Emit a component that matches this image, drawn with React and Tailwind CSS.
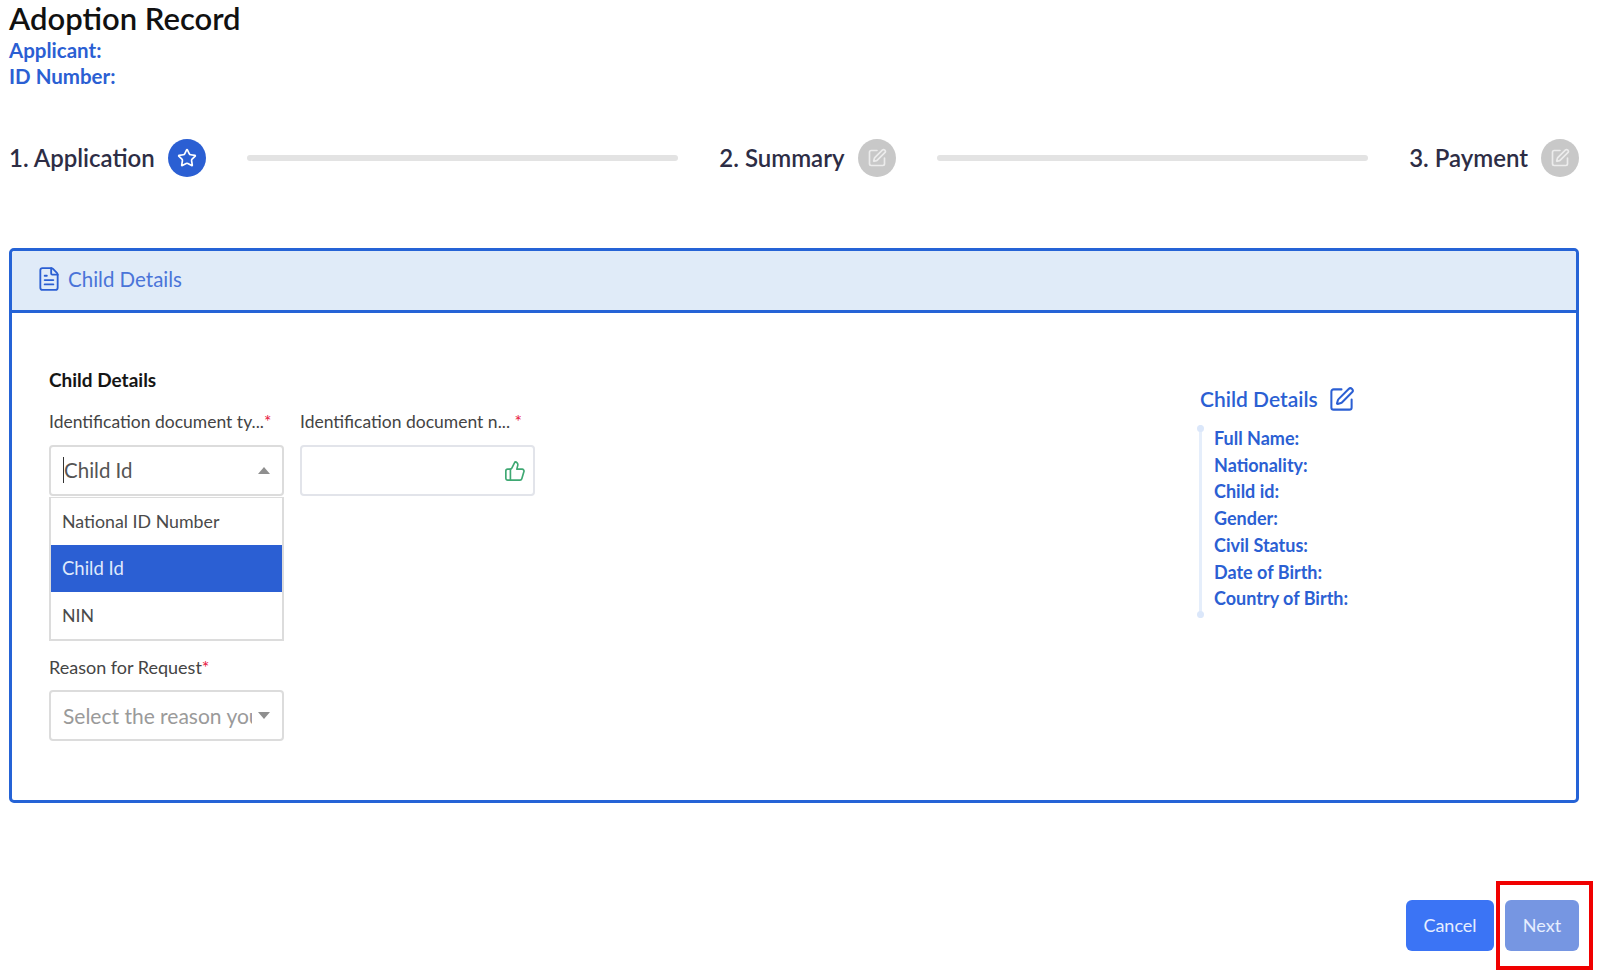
import React from "react";
import { Star, FileText, ThumbsUp, SquarePen } from "lucide-react";

const font = { fontFamily: '"Lato", "Open Sans", sans-serif' };

function Step({ label, active, Icon }) {
  return (
    <div className="flex items-center gap-[13px] shrink-0">
      <span className="text-[24px] leading-[32px] font-semibold text-[#2d2d45] whitespace-nowrap">{label}</span>
      <span className={`flex items-center justify-center w-[38px] h-[38px] rounded-full ${active ? "bg-[#2b5fd3]" : "bg-[#c8c8c8]"}`}>
        <Icon size={20} color={active ? "#ffffff" : "#ececec"} strokeWidth={2} />
      </span>
    </div>
  );
}

function Bar() {
  return <div className="flex-1 h-[6px] rounded-full bg-[#e3e3e3] mx-[41px]" />;
}

function Req() {
  return <span className="text-[#e8173f]">*</span>;
}

function Caret({ up, color = "#8f8f8f" }) {
  return (
    <svg width="12" height="7" viewBox="0 0 12 7" className="shrink-0">
      <path d={up ? "M0 7 L6 0 L12 7 Z" : "M0 0 L6 7 L12 0 Z"} fill={color} />
    </svg>
  );
}

const details = ["Full Name:", "Nationality:", "Child id:", "Gender:", "Civil Status:", "Date of Birth:", "Country of Birth:"];

export default function App() {
  return (
    <div style={font} className="w-[1600px] h-[977px] overflow-hidden bg-white pl-[9px] pr-[21px] flex flex-col">
      <h1 className="text-[31px] leading-[37px] font-semibold text-[#111111] whitespace-nowrap">Adoption Record</h1>
      <div className="text-[20.5px] leading-[26px] font-bold text-[#2b5fd3]">
        <div>Applicant:</div>
        <div>ID Number:</div>
      </div>

      <div className="flex items-center mt-[50px]">
        <Step label="1. Application" active Icon={Star} />
        <Bar />
        <Step label="2. Summary" Icon={SquarePen} />
        <Bar />
        <Step label="3. Payment" Icon={SquarePen} />
      </div>

      <section className="mt-[71px] h-[555px] border-[3px] border-[#2563d6] rounded-[5px] flex flex-col">
        <header className="h-[62px] shrink-0 bg-[#e0ebf8] border-b-[3px] border-[#2563d6] rounded-t-[3px] flex items-center pl-[24px] pb-[3px] gap-[6px]">
          <FileText size={26} color="#2b5fd3" strokeWidth={1.7} />
          <span className="text-[20.5px] text-[#4a74d8]">Child Details</span>
        </header>

        <div className="flex flex-1 pl-[37px]">
          <div className="w-[1151px] shrink-0 pt-[55px]">
            <div className="text-[19px] leading-[24px] font-bold text-[#151515]">Child Details</div>
            <div className="flex gap-[16px] mt-[18px]">
              <div className="w-[235px]">
                <div className="text-[17.5px] leading-[24px] text-[#444444] whitespace-nowrap">Identification document ty...<Req /></div>
                <div className="mt-[11px] h-[51px] border-2 border-[#dcdcdc] rounded-[4px] flex items-center justify-between pl-[13px] pr-[12px]">
                  <span className="text-[20.5px] text-[#555555] border-l border-[#333333] -ml-px leading-[26px] -mt-[2px]">Child Id</span>
                  <Caret up />
                </div>
                <div className="mt-px border-2 border-t border-[#dcdcdc] text-[17.8px] text-[#4a4a4a]">
                  <div className="h-[47px] flex items-center pl-[11px]">National ID Number</div>
                  <div className="h-[47px] flex items-center pl-[11px] bg-[#2b5fd3] text-[18.5px] text-[#dfe9fb]">Child Id</div>
                  <div className="h-[47px] flex items-center pl-[11px]">NIN</div>
                </div>
              </div>
              <div className="w-[235px]">
                <div className="text-[17.5px] leading-[24px] text-[#444444] whitespace-nowrap">Identification document n... <Req /></div>
                <div className="mt-[11px] h-[51px] border-2 border-[#e2e4ea] rounded-[4px] flex items-center justify-end pr-[7px]">
                  <ThumbsUp size={22} color="#3fa873" strokeWidth={1.8} />
                </div>
              </div>
            </div>
            <div className="w-[235px] mt-[14px]">
              <div className="text-[18px] leading-[24px] text-[#444444] whitespace-nowrap">Reason for Request<Req /></div>
              <div className="mt-[11px] h-[51px] border-2 border-[#dcdcdc] rounded-[4px] flex items-center justify-between pl-[12px] pr-[12px]">
                <span className="text-[21px] text-[#9a9a9a] whitespace-nowrap overflow-hidden w-[189px]">Select the reason you</span>
                <Caret />
              </div>
            </div>
          </div>

          <div className="pt-[72px]">
            <div className="flex items-center gap-[10px]">
              <span className="text-[21px] leading-[28px] font-semibold text-[#2b5fd3] whitespace-nowrap">Child Details</span>
              <SquarePen size={27} color="#2b5fd3" strokeWidth={1.8} />
            </div>
            <div className="relative mt-[12px] pl-[14px] pt-0 pb-[6px]">
              <div className="absolute left-[-1px] top-0 bottom-0 w-[3px] bg-[#e5eefb]" />
              <div className="absolute left-[-3px] top-0 w-[7px] h-[7px] rounded-full bg-[#dbe7fa]" />
              <div className="absolute left-[-3px] bottom-0 w-[7px] h-[7px] rounded-full bg-[#dbe7fa]" />
              {details.map((d) => (
                <div key={d} className="text-[18px] leading-[26.7px] font-bold text-[#2b5fd3] whitespace-nowrap">{d}</div>
              ))}
            </div>
          </div>
        </div>
      </section>

      <div className="flex justify-end gap-[11px] mt-[97px]">
        <button className="w-[88px] h-[51px] rounded-[6px] bg-[#3b74f5] text-[18px] text-[#e6eeff]">Cancel</button>
        <div className="relative">
          <button className="w-[74px] h-[51px] rounded-[6px] bg-[#7696e2] text-[18px] text-[#e6eeff]">Next</button>
          <div className="absolute left-[-9px] right-[-14px] top-[-19px] bottom-[-19px] border-[4px] border-[#f00000]" />
        </div>
      </div>
    </div>
  );
}
